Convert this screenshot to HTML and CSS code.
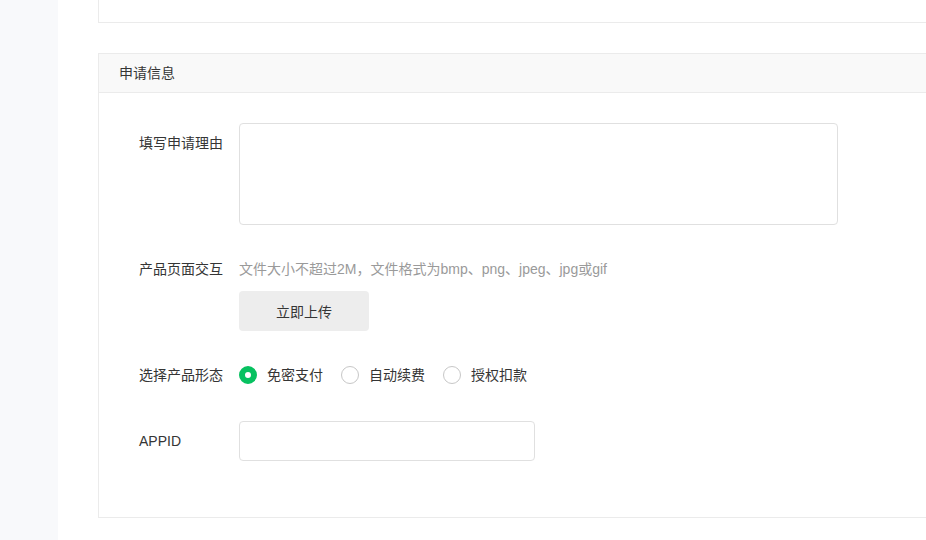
FILE: index.html
```html
<!DOCTYPE html>
<html lang="zh-CN">
<head>
<meta charset="utf-8">
<title>申请信息</title>
<link rel="stylesheet" href="styles.css">
</head>
<body>
<div class="layout">
  <aside class="sidebar"></aside>
  <main class="main">
    <section class="card card-tail"></section>
    <section class="card">
      <header class="card-hd">申请信息</header>
      <div class="card-bd">
        <div class="form-row">
          <label class="form-label">填写申请理由</label>
          <div class="form-ctrl">
            <textarea class="textarea"></textarea>
          </div>
        </div>
        <div class="form-row">
          <label class="form-label">产品页面交互</label>
          <div class="form-ctrl">
            <p class="tips">文件大小不超过2M，文件格式为bmp、png、jpeg、jpg或gif</p>
            <button class="btn" type="button">立即上传</button>
          </div>
        </div>
        <div class="form-row">
          <label class="form-label">选择产品形态</label>
          <div class="form-ctrl radio-group">
            <label class="radio"><span class="radio-icon checked"></span><span class="radio-text">免密支付</span></label>
            <label class="radio"><span class="radio-icon"></span><span class="radio-text">自动续费</span></label>
            <label class="radio"><span class="radio-icon"></span><span class="radio-text">授权扣款</span></label>
          </div>
        </div>
        <div class="form-row">
          <label class="form-label">APPID</label>
          <div class="form-ctrl">
            <input class="input" type="text">
          </div>
        </div>
      </div>
    </section>
  </main>
</div>
</body>
</html>
```

FILE: styles.css
```css
* { box-sizing: border-box; }
html, body { margin: 0; padding: 0; height: 100%; }
body {
  font-family: "Liberation Sans", "Noto Sans CJK SC", sans-serif;
  font-size: 14px;
  color: #353535;
  background: #fff;
  overflow: hidden;
}
.layout {
  display: flex;
  width: 926px;
  height: 540px;
  overflow: hidden;
}
.sidebar {
  flex: 0 0 58px;
  background: #f8f9fb;
}
.main {
  flex: 1 1 auto;
  padding-left: 40px;
  overflow: hidden;
}
.card {
  width: 900px;
  border: 1px solid #ebebeb;
  background: #fff;
}
.card-tail {
  height: 23px;
  border-top: none;
  margin-bottom: 30px;
}
.card-hd {
  height: 39px;
  line-height: 38px;
  padding-left: 20px;
  background: #f9f9f9;
  border-bottom: 1px solid #ebebeb;
  font-size: 14px;
  color: #353535;
}
.card-bd {
  padding: 30px 40px 32px;
}
.form-row {
  display: flex;
  align-items: flex-start;
  margin-bottom: 24px;
}
.form-label {
  flex: 0 0 100px;
  padding-top: 10px;
  line-height: 20px;
  color: #353535;
}
.form-ctrl { flex: 0 0 auto; }
.textarea {
  display: block;
  width: 599px;
  height: 102px;
  border: 1px solid #e0e0e0;
  border-radius: 4px;
  resize: none;
  outline: none;
  font: inherit;
  padding: 8px 12px;
}
.tips {
  margin: 0;
  padding-top: 10px;
  line-height: 20px;
  color: #9a9a9a;
}
.btn {
  display: block;
  margin-top: 12px;
  width: 130px;
  height: 40px;
  border: none;
  border-radius: 4px;
  background: #ededed;
  color: #353535;
  font: inherit;
  font-size: 14px;
}
.radio-group {
  display: flex;
  align-items: center;
  height: 42px;
  padding-bottom: 2px;
}
.radio {
  display: flex;
  align-items: center;
  margin-right: 18px;
  line-height: 20px;
}
.radio-icon {
  width: 18px;
  height: 18px;
  border-radius: 50%;
  border: 1px solid #c7c7c7;
  margin-right: 10px;
  background: #fff;
}
.radio-icon.checked {
  border: 6px solid #07c160;
}
.input {
  display: block;
  width: 296px;
  height: 40px;
  border: 1px solid #e0e0e0;
  border-radius: 4px;
  outline: none;
  font: inherit;
  padding: 0 12px;
}
```
